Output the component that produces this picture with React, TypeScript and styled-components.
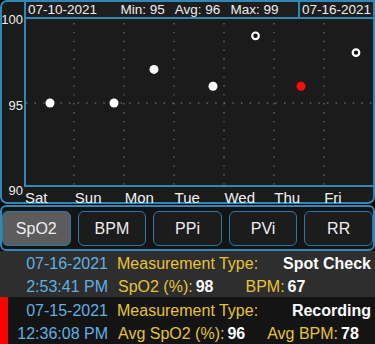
import styled, { createGlobalStyle } from 'styled-components'

const BLUE = '#2f88b8'

const days = ['Sat', 'Sun', 'Mon', 'Tue', 'Wed', 'Thu', 'Fri']

// x is where the reading sits inside the plot, v is the SpO2 value
const readings = [
    { x: 24, v: 95, kind: 'spot' },
    { x: 88, v: 95, kind: 'spot' },
    { x: 128, v: 97, kind: 'spot' },
    { x: 187, v: 96, kind: 'spot' },
    { x: 229.5, v: 99, kind: 'recording' },
    { x: 275, v: 96, kind: 'alert' },
    { x: 330, v: 98, kind: 'recording' },
]

const tabs = ['SpO2', 'BPM', 'PPi', 'PVi', 'RR']

const history = [
    {
        date: '07-16-2021',
        time: '2:53:41 PM',
        type: 'Spot Check',
        spo2Label: 'SpO2 (%):',
        spo2: 98,
        bpmLabel: 'BPM:',
        bpm: 67,
        gap: 32,
        alert: false,
    },
    {
        date: '07-15-2021',
        time: '12:36:08 PM',
        type: 'Recording',
        spo2Label: 'Avg SpO2 (%):',
        spo2: 96,
        bpmLabel: 'Avg BPM:',
        bpm: 78,
        gap: 22,
        alert: true,
    },
]

const yOf = (v: number) => (100 - v) * 16.8

const App = () => {
    return (
        <Page>
            <GlobalStyle />
            <ChartPanel>
                <YAxis>
                    <YLabel>100</YLabel>
                    <YLabel>95</YLabel>
                    <YLabel>90</YLabel>
                </YAxis>
                <Header>
                    <DateBox>07-10-2021</DateBox>
                    <StatsBox>
                        <span>Min: 95</span>
                        <span>Avg: 96</span>
                        <span>Max: 99</span>
                    </StatsBox>
                    <DateBox>07-16-2021</DateBox>
                </Header>
                <Plot>
                    <svg width="100%" height="100%" viewBox="0 0 347 166">
                        <line x1="0" y1="84" x2="347" y2="84" stroke="#666" strokeWidth="1.4" strokeDasharray="1.4 7.2" />
                        {[48, 98, 148, 198, 248, 298].map((x) => (
                            <line key={x} x1={x} y1="4" x2={x} y2="166" stroke="#666" strokeWidth="1.4" strokeDasharray="1.4 7.5" />
                        ))}
                        {readings.map((r, i) =>
                            r.kind === 'recording' ? (
                                <circle key={i} cx={r.x} cy={yOf(r.v)} r="3.3" fill="#111" stroke="#fff" strokeWidth="2.2" />
                            ) : (
                                <circle key={i} cx={r.x} cy={yOf(r.v)} r="4.5" fill={r.kind === 'alert' ? '#ff0a0a' : '#fff'} />
                            )
                        )}
                    </svg>
                </Plot>
                <Days>
                    {days.map((d) => (
                        <Day key={d}>{d}</Day>
                    ))}
                </Days>
            </ChartPanel>

            <TabBar>
                {tabs.map((t, i) => (
                    <Tab key={t} active={i === 0}>{t}</Tab>
                ))}
            </TabBar>

            {history.map((h) => (
                <Row key={h.date} alert={h.alert}>
                    <Stamp>{h.date}</Stamp>
                    <TypeLine>
                        <Label>Measurement Type:</Label>
                        <Value>{h.type}</Value>
                    </TypeLine>
                    <Stamp>{h.time}</Stamp>
                    <Readings gap={h.gap}>
                        <Pair>
                            <Label>{h.spo2Label}</Label>
                            <Value>{h.spo2}</Value>
                        </Pair>
                        <Pair>
                            <Label>{h.bpmLabel}</Label>
                            <Value>{h.bpm}</Value>
                        </Pair>
                    </Readings>
                </Row>
            ))}
        </Page>
    )
}

export default App

const GlobalStyle = createGlobalStyle`
* { box-sizing: border-box; }
body {
    margin: 0;
    background: #000;
    font-family: "Liberation Sans", Arial, sans-serif;
}
`

const Page = styled.div`
width: 375px;
height: 344px;
background: #000;
overflow: hidden;
`

const ChartPanel = styled.div`
width: 375px;
height: 204px;
border: 2px solid ${BLUE};
border-radius: 7px;
background: #1b1b1b;
display: grid;
grid-template-columns: 22px 1fr;
grid-template-rows: 17px 168px 1fr;
`

const YAxis = styled.div`
grid-column: 1;
grid-row: 1 / 4;
display: flex;
flex-direction: column;
justify-content: space-between;
align-items: flex-end;
padding: 11px 1px 9px 0;
`

const YLabel = styled.div`
color: #eee;
font-size: 13px;
line-height: 14px;
`

const Header = styled.div`
grid-column: 2;
grid-row: 1;
display: flex;
margin-top: -2px;
height: 19px;
margin-right: -2px;
`

const DateBox = styled.div`
width: 77px;
border: 2px solid ${BLUE};
background: #1e1e1e;
color: #eee;
font-size: 13.5px;
line-height: 16px;
text-align: center;
& + & { margin-left: -2px; }
`

const StatsBox = styled.div`
flex: 1;
margin-left: -2px;
border: 2px solid ${BLUE};
border-left-width: 0;
border-right-width: 0;
background: #1e1e1e;
color: #eee;
font-size: 13.5px;
line-height: 16px;
display: flex;
justify-content: center;
gap: 10px;
padding-left: 2px;
`

const Plot = styled.div`
grid-column: 2;
grid-row: 2;
border-left: 2px solid ${BLUE};
border-bottom: 2px solid ${BLUE};
& svg { display: block; }
`

const Days = styled.div`
grid-column: 2;
grid-row: 3;
display: grid;
grid-template-columns: repeat(7, 1fr);
`

const Day = styled.div`
color: #f2f2f2;
font-size: 15px;
line-height: 18px;
padding-left: 1px;
margin-top: 2px;
`

const TabBar = styled.div`
margin-top: 1px;
height: 46px;
border: 2px solid ${BLUE};
border-radius: 6px;
background: #141414;
display: flex;
gap: 7px;
padding: 4px 0 2px;
`

const Tab = styled.div<{ active?: boolean }>`
flex: 1;
height: 35px;
border: 1.5px solid #2a7aa6;
border-radius: 6px;
background: ${({ active }) => active ? '#5c5c5c' : '#1c1c1c'};
color: #eee;
font-size: 16px;
display: flex;
align-items: center;
justify-content: center;
`

const Row = styled.div<{ alert?: boolean }>`
height: 46px;
background: ${({ alert }) => alert ? '#141414' : '#2e2e2e'};
box-shadow: ${({ alert }) => alert ? 'inset 8px 0 0 #ff0000' : 'none'};
display: grid;
grid-template-columns: 108px 1fr;
column-gap: 9px;
grid-auto-rows: 23px;
padding: 1px 4px 0 0;
font-size: 16px;
line-height: 23px;
& + & { height: 47px; padding-top: 2px; }
`

const Stamp = styled.div`
color: #5fb1e3;
text-align: right;
`

const Label = styled.span`
color: #e6c436;
`

const Value = styled.span`
color: #fff;
font-weight: bold;
`

const TypeLine = styled.div`
display: flex;
justify-content: space-between;
`

const Readings = styled.div<{ gap: number }>`
display: flex;
gap: ${({ gap }) => gap}px;
padding-left: 1px;
`

const Pair = styled.div`
display: flex;
gap: 3px;
`
